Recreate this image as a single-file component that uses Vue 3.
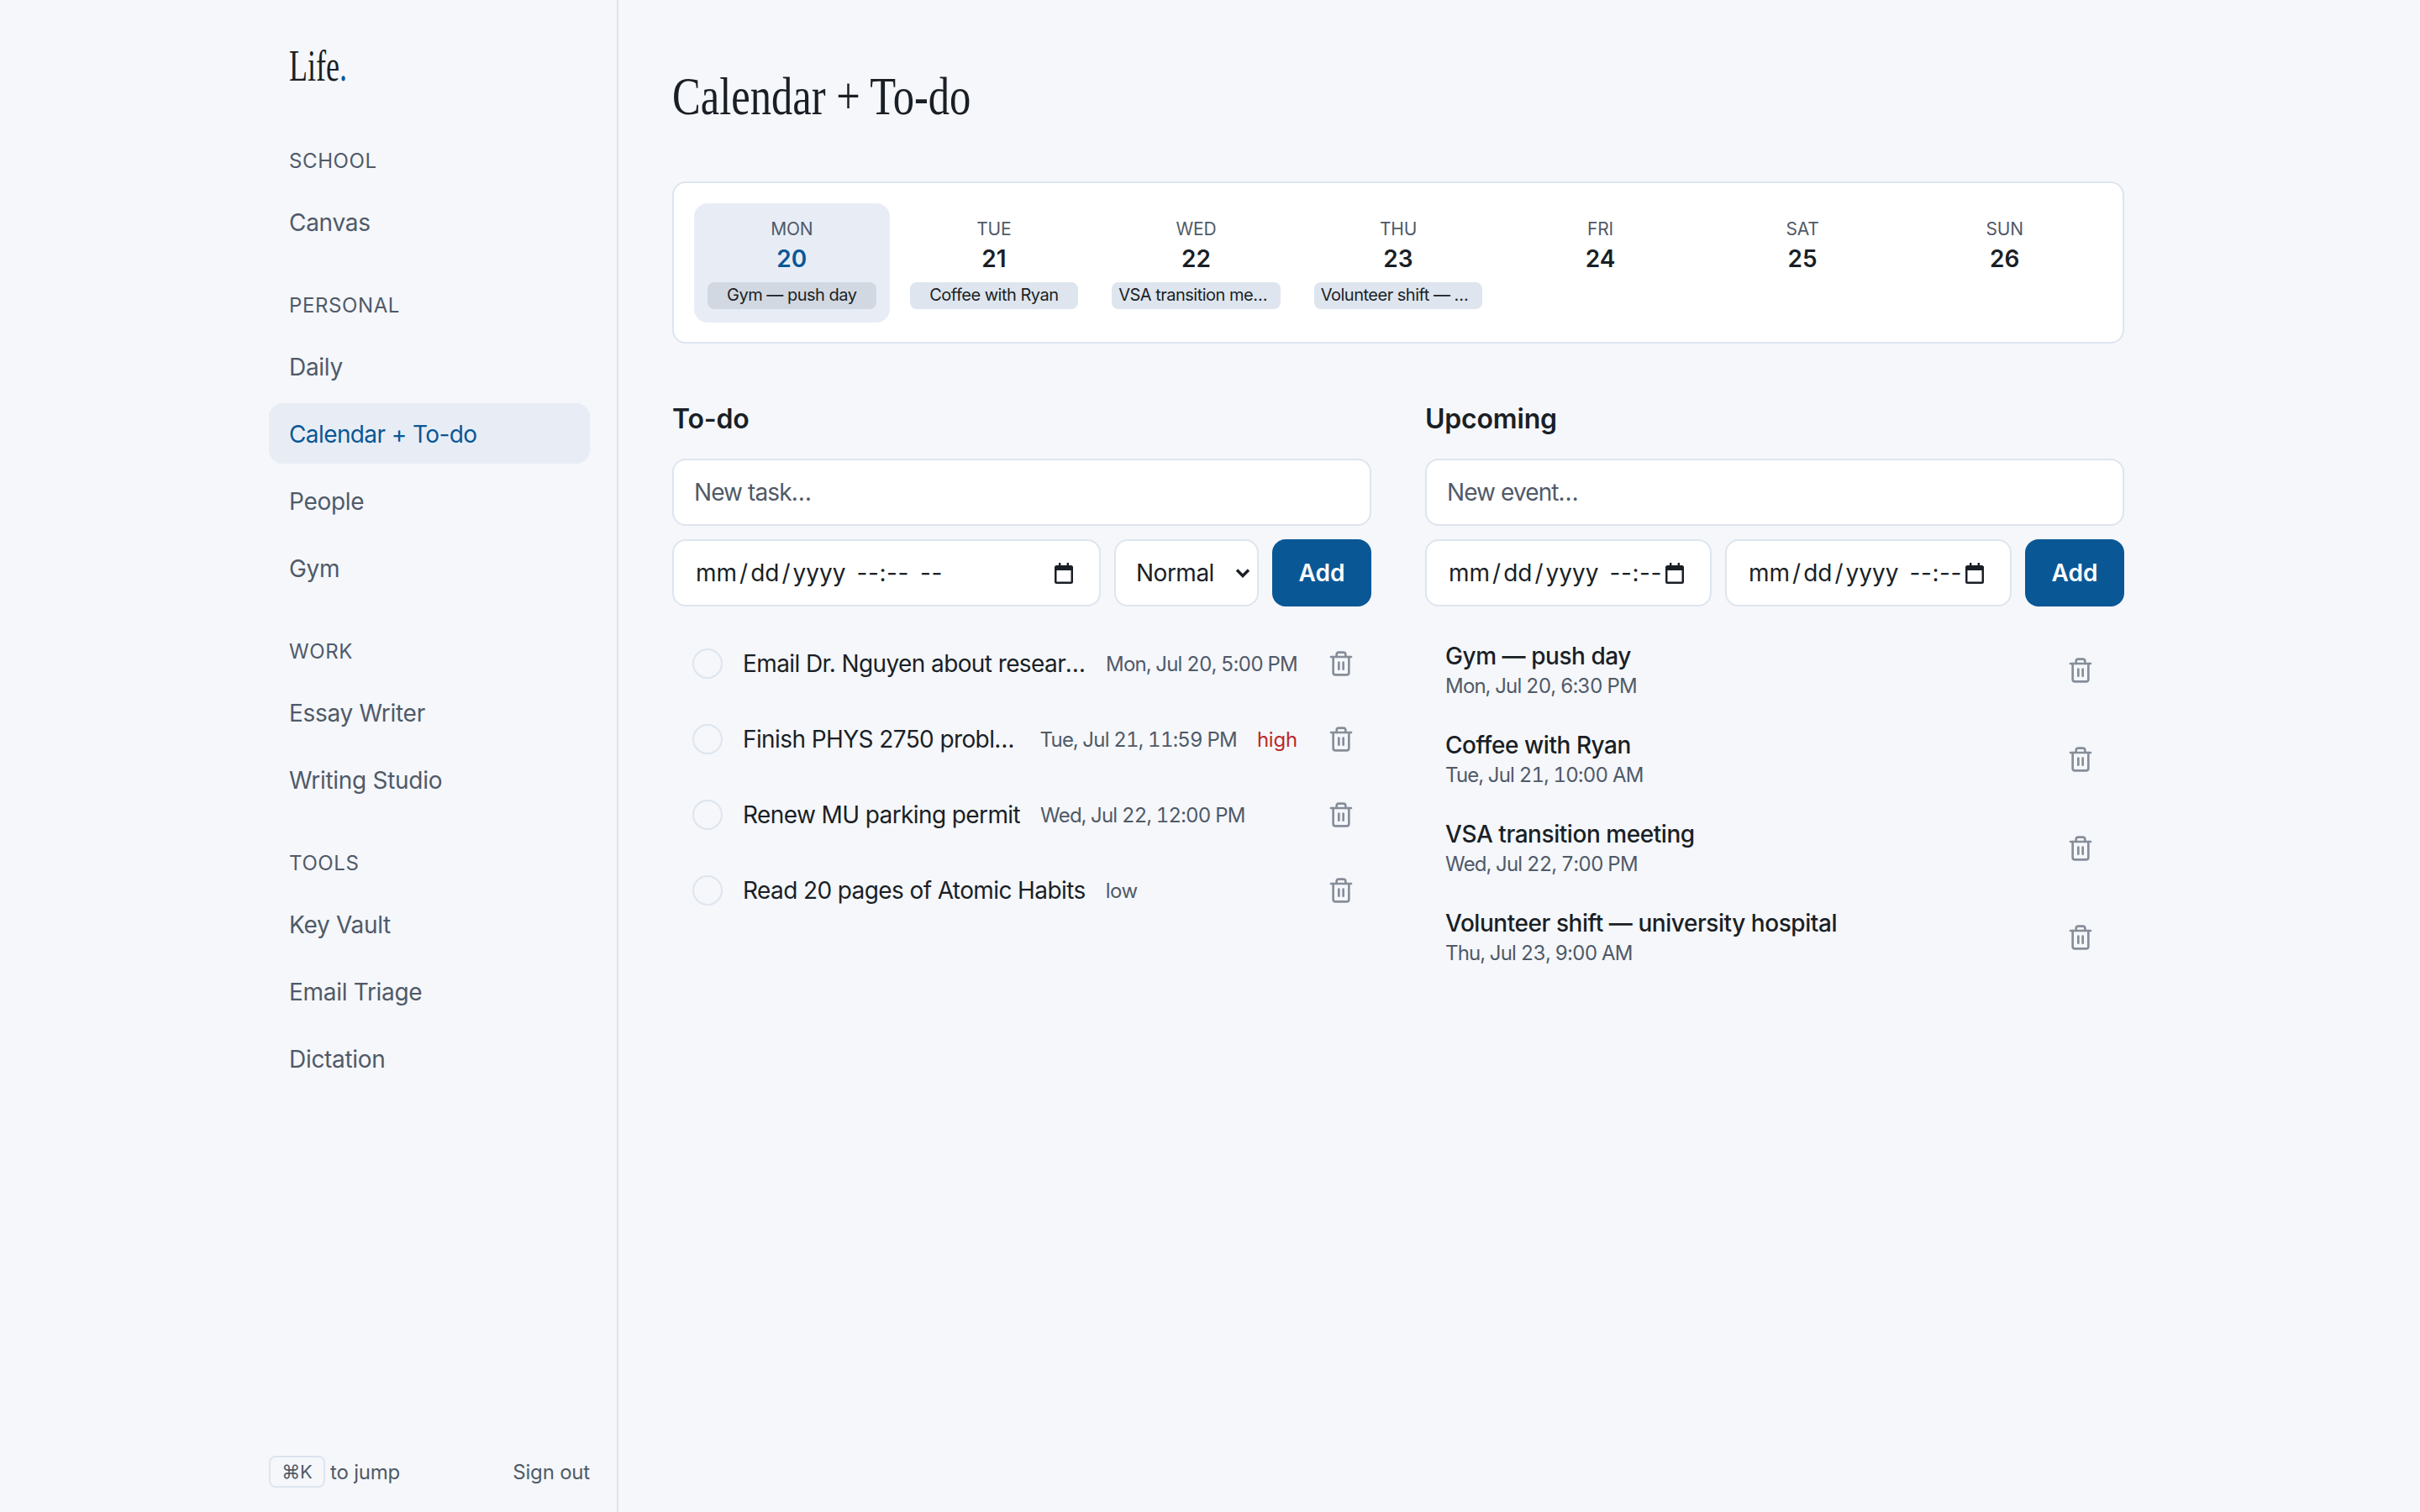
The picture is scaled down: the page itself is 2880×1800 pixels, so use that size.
<template>
  <div class="app">
    <aside class="sidebar">
      <div class="logo"><span class="logo-text">Life<span class="dot">.</span></span></div>
      <section v-for="s in sections" :key="s.label" class="nav-section">
        <div class="nav-label">{{ s.label }}</div>
        <a v-for="i in s.items" :key="i" class="nav-item" :class="{ active: i === 'Calendar + To-do' }">{{ i }}</a>
      </section>
      <div class="side-foot">
        <div class="jump"><kbd>⌘K</kbd><span>to jump</span></div>
        <span class="signout">Sign out</span>
      </div>
    </aside>
    <main class="main">
      <h1><span>Calendar + To-do</span></h1>
      <div class="week">
        <div v-for="d in days" :key="d.n" class="day" :class="{ today: d.n === 20 }">
          <div class="dow">{{ d.dow }}</div>
          <div class="num">{{ d.n }}</div>
          <div v-if="d.ev" class="chip">{{ d.ev }}</div>
        </div>
      </div>
      <div class="cols">
        <section>
          <h2>To-do</h2>
          <input class="field wide" placeholder="New task…" />
          <div class="form-row">
            <div class="field dt grow">
              <span class="dt-date">mm<i>/</i>dd<i>/</i>yyyy</span>
              <span class="dt-time">--:--</span>
              <span class="dt-ampm">--</span>
              <svg class="cal" viewBox="0 0 24 26" width="24" height="26"><path d="M6 1h2.4v3h7.2V1H18v3h2.5A2.5 2.5 0 0 1 23 6.5v17a2.5 2.5 0 0 1-2.5 2.500h-17A2.500 2.500 0 0 1 1 23.500v-17A2.500 2.500 0 0 1 3.500 4H6zM3.500 10v13.500h17V10z" fill="#1a1f26" /></svg>
            </div>
            <select class="field sel"><option>Normal</option></select>
            <button class="add">Add</button>
          </div>
          <ul class="list">
            <li v-for="t in todos" :key="t.title" class="todo">
              <span class="circle"></span>
              <span class="title">{{ t.title }}</span>
              <span v-if="t.date" class="meta">{{ t.date }}</span>
              <span v-if="t.pri" class="pri" :class="t.pri">{{ t.pri }}</span>
              <button class="trash" aria-label="Delete">
                <svg viewBox="0 0 24 24" width="32" height="32" fill="none" stroke="currentColor" stroke-width="2" stroke-linecap="round" stroke-linejoin="round"><path d="M3 6h18" /><path d="M19 6v14a2 2 0 0 1-2 2H7a2 2 0 0 1-2-2V6" /><path d="M8 6V4a2 2 0 0 1 2-2h4a2 2 0 0 1 2 2v2" /><path d="M10 11v6" /><path d="M14 11v6" /></svg>
              </button>
            </li>
          </ul>
        </section>
        <section>
          <h2>Upcoming</h2>
          <input class="field wide" placeholder="New event…" />
          <div class="form-row">
            <div v-for="n in 2" :key="n" class="field dt half">
              <span class="dt-date">mm<i>/</i>dd<i>/</i>yyyy</span>
              <span class="dt-time">--:--</span>
              <svg class="cal" viewBox="0 0 24 26" width="24" height="26"><path d="M6 1h2.4v3h7.2V1H18v3h2.5A2.5 2.5 0 0 1 23 6.5v17a2.5 2.5 0 0 1-2.5 2.500h-17A2.500 2.500 0 0 1 1 23.500v-17A2.500 2.500 0 0 1 3.500 4H6zM3.500 10v13.500h17V10z" fill="#1a1f26" /></svg>
            </div>
            <button class="add">Add</button>
          </div>
          <ul class="list">
            <li v-for="e in events" :key="e.title" class="event">
              <div class="ev-body">
                <div class="ev-title">{{ e.title }}</div>
                <div class="ev-date">{{ e.date }}</div>
              </div>
              <button class="trash" aria-label="Delete">
                <svg viewBox="0 0 24 24" width="32" height="32" fill="none" stroke="currentColor" stroke-width="2" stroke-linecap="round" stroke-linejoin="round"><path d="M3 6h18" /><path d="M19 6v14a2 2 0 0 1-2 2H7a2 2 0 0 1-2-2V6" /><path d="M8 6V4a2 2 0 0 1 2-2h4a2 2 0 0 1 2 2v2" /><path d="M10 11v6" /><path d="M14 11v6" /></svg>
              </button>
            </li>
          </ul>
        </section>
      </div>
    </main>
  </div>
</template>

<script setup>
const sections = [
  { label: 'SCHOOL', items: ['Canvas'] },
  { label: 'PERSONAL', items: ['Daily', 'Calendar + To-do', 'People', 'Gym'] },
  { label: 'WORK', items: ['Essay Writer', 'Writing Studio'] },
  { label: 'TOOLS', items: ['Key Vault', 'Email Triage', 'Dictation'] },
]
const days = [
  { dow: 'MON', n: 20, ev: 'Gym — push day' },
  { dow: 'TUE', n: 21, ev: 'Coffee with Ryan' },
  { dow: 'WED', n: 22, ev: 'VSA transition meeting' },
  { dow: 'THU', n: 23, ev: 'Volunteer shift — university hospital' },
  { dow: 'FRI', n: 24 },
  { dow: 'SAT', n: 25 },
  { dow: 'SUN', n: 26 },
]
const todos = [
  { title: 'Email Dr. Nguyen about research position', date: 'Mon, Jul 20, 5:00 PM' },
  { title: 'Finish PHYS 2750 problem set', date: 'Tue, Jul 21, 11:59 PM', pri: 'high' },
  { title: 'Renew MU parking permit', date: 'Wed, Jul 22, 12:00 PM' },
  { title: 'Read 20 pages of Atomic Habits', pri: 'low' },
]
const events = [
  { title: 'Gym — push day', date: 'Mon, Jul 20, 6:30 PM' },
  { title: 'Coffee with Ryan', date: 'Tue, Jul 21, 10:00 AM' },
  { title: 'VSA transition meeting', date: 'Wed, Jul 22, 7:00 PM' },
  { title: 'Volunteer shift — university hospital', date: 'Thu, Jul 23, 9:00 AM' },
]
</script>

<style>
html, body { margin: 0; background: #f5f7fb; }
</style>

<style scoped>
.app {
  display: flex;
  height: 1800px;
  font-family: Inter, "Liberation Sans", sans-serif;
  color: #1a1f26;
  background: #f5f7fb;
  overflow: hidden;
}
.sidebar {
  width: 736px;
  height: 1800px;
  box-sizing: border-box;
  padding: 0 32px 28px 320px;
  border-right: 2px solid #dde5ee;
  display: flex;
  flex-direction: column;
  flex: none;
}
.logo { height: 176px; padding: 50px 0 0 24px; box-sizing: border-box; }
.logo-text {
  display: inline-block;
  font: 53px/56px "Liberation Serif", serif;
  transform: scaleX(0.68);
  transform-origin: left;
}
.dot { color: #0a5796; }
.nav-section { margin-bottom: 40px; }
.nav-label {
  height: 30px;
  line-height: 32px;
  padding-left: 24px;
  margin-bottom: 22px;
  font-size: 24px;
  letter-spacing: 0.6px;
  color: #505a68;
}
.nav-item {
  display: block;
  height: 72px;
  line-height: 74px;
  padding-left: 24px;
  margin-bottom: 8px;
  border-radius: 16px;
  font-size: 28px;
  letter-spacing: -0.3px;
  color: #505a68;
}
.nav-item.active { background: #e8edf5; color: #0a5796; letter-spacing: -0.6px; }
.side-foot {
  margin-top: auto;
  display: flex;
  justify-content: space-between;
  align-items: center;
  font-size: 24px;
  color: #505a68;
  padding-bottom: 1px;
}
.jump { display: flex; align-items: center; gap: 6px; letter-spacing: -0.2px; }
.signout { letter-spacing: -0.2px; }
kbd {
  width: 67px;
  height: 38px;
  box-sizing: border-box;
  border: 2px solid #dde5ee;
  border-radius: 8px;
  display: flex;
  align-items: center;
  justify-content: center;
  font: 22px Inter, "DejaVu Sans", sans-serif;
}
.main { flex: 1; min-width: 0; padding: 79px 352px 0 64px; }
h1 { margin: 0 0 65px; height: 72px; font-weight: 400; }
h1 span {
  display: inline-block;
  font: 64px/72px "Liberation Serif", serif;
  transform: scaleX(0.79);
  transform-origin: left;
  white-space: nowrap;
}
.week {
  display: grid;
  grid-template-columns: repeat(7, 1fr);
  gap: 8px;
  padding: 24px;
  height: 193px;
  box-sizing: border-box;
  background: #fff;
  border: 2px solid #dde5ee;
  border-radius: 16px;
  margin-bottom: 67px;
}
.day {
  min-width: 0;
  height: 142px;
  box-sizing: border-box;
  padding: 18px 16px 16px;
  border-radius: 16px;
  text-align: center;
}
.day.today { background: #e8edf5; }
.dow { font-size: 21px; line-height: 26px; letter-spacing: -0.2px; color: #505a68; }
.num { font-size: 28px; line-height: 38px; margin-top: 3px; font-weight: 600; }
.today .num { color: #0a5796; }
.chip {
  margin-top: 9px;
  height: 32px;
  line-height: 31px;
  padding: 0 8px;
  border-radius: 8px;
  background: #dee5ee;
  font-size: 20px;
  letter-spacing: -0.5px;
  white-space: nowrap;
  overflow: hidden;
  text-overflow: ellipsis;
}
.today .chip { background: #d2d8e1; }
.cols { display: grid; grid-template-columns: 1fr 1fr; gap: 64px; }
.cols > section { min-width: 0; }
h2 { margin: 0 0 24px; font-size: 32px; line-height: 46px; font-weight: 600; letter-spacing: -0.2px; }
.field {
  height: 80px;
  box-sizing: border-box;
  background: #fff;
  border: 2px solid #dde5ee;
  border-radius: 16px;
  font: 28px Inter, sans-serif;
  letter-spacing: -0.5px;
  color: #1a1f26;
  padding: 0 24px;
  outline: none;
}
.field::placeholder { color: #505a68; opacity: 1; letter-spacing: -0.9px; }
.wide { display: block; width: 100%; }
.form-row { display: flex; gap: 16px; margin-top: 16px; }
.dt { display: flex; align-items: center; white-space: nowrap; overflow: hidden; padding: 0 30px 0 26px; min-width: 0; letter-spacing: 0; }
.dt-date i { font-style: normal; margin: 0 3px; }
.dt-time { margin-left: 13px; letter-spacing: 0.6px; }
.dt-ampm { margin-left: 13px; letter-spacing: 0.6px; }
.cal { margin-left: auto; flex: none; }
.grow { flex: 1; }
.half { flex: 1; }
.sel {
  width: 172px;
  flex: none;
  appearance: none;
  padding-left: 24px;
  background: #fff url("data:image/svg+xml,%3Csvg xmlns='http://www.w3.org/2000/svg' width='18' height='12' viewBox='0 0 18 12'%3E%3Cpath d='M2 2.500l7 7 7-7' fill='none' stroke='%231a1f26' stroke-width='3.400' /%3E%3C/svg%3E") no-repeat right 8px center;
}
.add {
  width: 118px;
  height: 80px;
  flex: none;
  border: none;
  border-radius: 16px;
  background: #0a5796;
  color: #fff;
  font: 600 28px Inter, sans-serif;
}
.list { list-style: none; margin: 23px 0 0; padding: 0; }
.todo {
  display: flex;
  align-items: center;
  gap: 24px;
  height: 90px;
  padding: 0 8px 0 24px;
}
.circle {
  width: 36px;
  height: 36px;
  box-sizing: border-box;
  flex: none;
  border: 2px solid #dde5ee;
  border-radius: 50%;
}
.title {
  flex: 0 1 auto;
  min-width: 0;
  font-size: 28px;
  letter-spacing: -0.6px;
  white-space: nowrap;
  overflow: hidden;
  text-overflow: ellipsis;
}
.meta { flex: none; font-size: 24px; letter-spacing: -0.8px; font-variant-numeric: tabular-nums; color: #505a68; white-space: nowrap; }
.pri { flex: none; font-size: 24px; letter-spacing: -0.2px; }
.pri.high { color: #b92a2a; }
.pri.low { color: #505a68; letter-spacing: -0.4px; }
.trash {
  flex: none;
  margin-left: auto;
  padding: 12px;
  border: none;
  background: none;
  color: #868e99;
  display: flex;
}
.event {
  display: flex;
  align-items: center;
  height: 106px;
  padding: 0 36px 0 24px;
  box-sizing: border-box;
}
.event .trash { margin-right: -12px; padding: 12px; }
.ev-title { font-size: 28px; line-height: 36px; font-weight: 500; letter-spacing: -0.45px; }
.ev-date { font-size: 24px; line-height: 33px; margin-top: 1px; letter-spacing: -0.8px; font-variant-numeric: tabular-nums; color: #505a68; }
</style>
